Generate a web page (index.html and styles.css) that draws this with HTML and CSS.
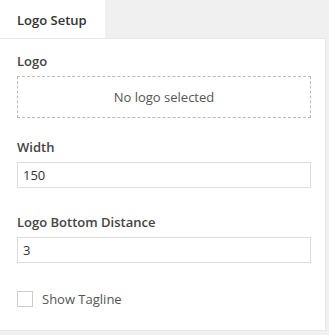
FILE: index.html
```html
<!DOCTYPE html>
<html lang="en">
  <head>
    <meta charset="UTF-8" />
    <title>Logo Setup</title>
    <link rel="stylesheet" href="styles.css">
  </head>
  <body>
    <div class="tabs">
      <div class="tab active">Logo Setup</div>
    </div>
    <div class="panel">
      <div class="field">
        <label class="label">Logo</label>
        <div class="dropzone">No logo selected</div>
      </div>
      <div class="field field-input">
        <label class="label">Width</label>
        <input type="text" class="text-input" value="150" />
      </div>
      <div class="field field-input">
        <label class="label">Logo Bottom Distance</label>
        <input type="text" class="text-input" value="3" />
      </div>
      <label class="check">
        <span class="box"></span>
        Show Tagline
      </label>
    </div>
  </body>
</html>
```

FILE: styles.css
```css
body {
  margin: 0;
  background-color: #f0f0f0;
  font-family: "Open Sans", "Noto Sans", sans-serif;
  font-size: 13px;
  color: #444;
  width: 329px;
  height: 335px;
}

.tabs {
  display: flex;
  height: 38px;
}

.tab {
  width: 88px;
  padding: 0 0 0 17px;
  line-height: 40px;
  font-weight: 600;
  color: #333;
}

.tab.active {
  background-color: #fff;
}

.panel {
  margin: 0 3px 0 0;
  height: 293px;
  background-color: #fff;
  border: 1px solid #e8e8e8;
  border-left: none;
  padding: 13px 14px 0 17px;
  box-sizing: border-box;
}

.field {
  margin-bottom: 20px;
}

.field-input {
  margin-bottom: 25px;
}

.label {
  display: block;
  font-weight: 600;
  color: #444;
  margin-bottom: 6px;
}

.dropzone {
  height: 40px;
  line-height: 40px;
  border: 1px dashed #bbb;
  text-align: center;
  color: #555;
}

.text-input {
  display: block;
  width: 100%;
  height: 26px;
  box-sizing: border-box;
  border: 1px solid #ddd;
  padding: 0 5px;
  font-family: inherit;
  font-size: 13px;
  color: #333;
  outline: none;
}

.check {
  display: flex;
  align-items: center;
  gap: 9px;
  margin-top: 27px;
  color: #555;
}

.check .box {
  width: 14px;
  height: 14px;
  border: 1px solid #ccc;
}
```
